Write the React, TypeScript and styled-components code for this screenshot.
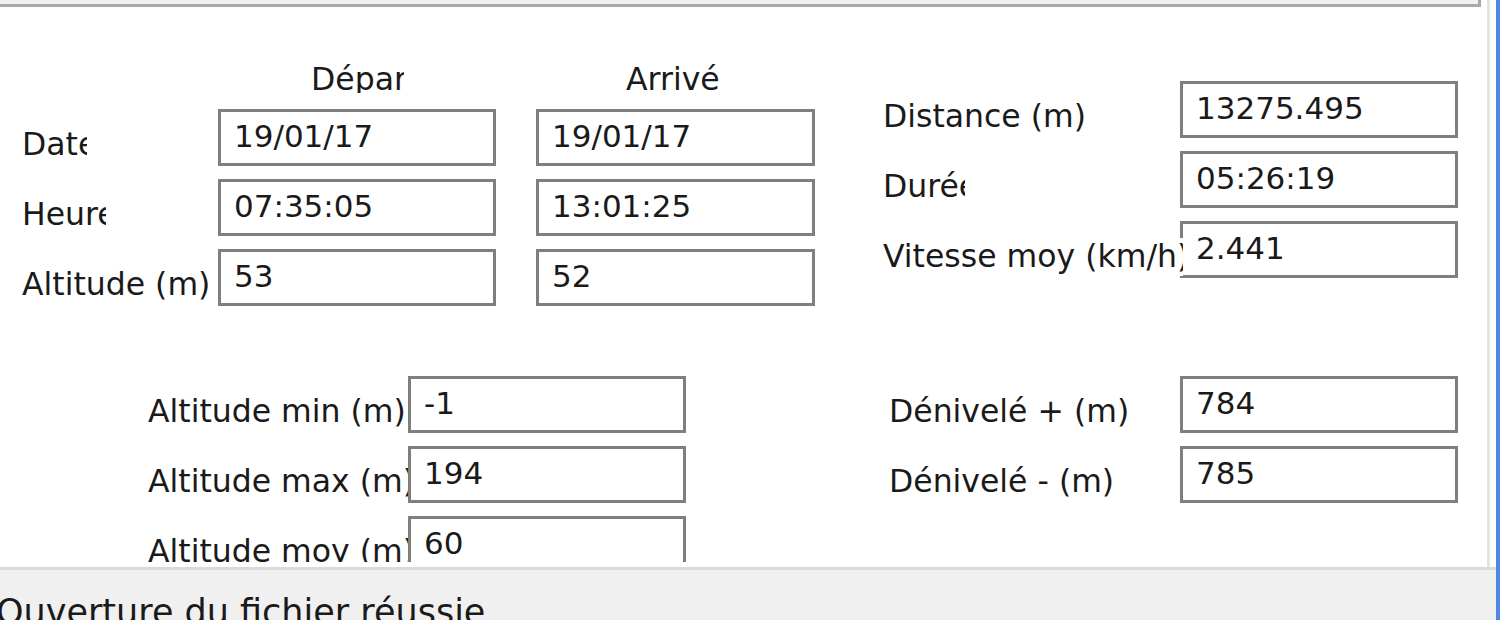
import React from "react";
import styled, { createGlobalStyle } from "styled-components";

const GlobalStyle = createGlobalStyle`
  html, body {
    margin: 0;
    padding: 0;
    overflow: hidden;
    background: #ffffff;
  }
  body {
    font-family: "DejaVu Sans", Verdana, sans-serif;
    color: #1a1a1a;
  }
`;

const Window = styled.div`
  width: 1500px;
  height: 620px;
  box-sizing: border-box;
  display: flex;
  flex-direction: column;
  border-right: 4px solid #4f87e2;
  background: #ffffff;
  overflow: hidden;
`;

const Main = styled.div`
  flex: none;
  height: 567px;
  display: flex;
  flex-direction: column;
  margin-right: 6px;
  border-right: 3px solid #e3e3e3;
`;

const TopStrip = styled.div`
  flex: none;
  width: 1481px;
  height: 7px;
  box-sizing: border-box;
  background: #f1f1f1;
  border-bottom: 3px solid #a6a8ae;
  border-right: 3px solid #a6a8ae;
`;

const Panel = styled.div`
  flex: 1;
  min-height: 0;
  overflow: hidden;
  background: #ffffff;
  border-bottom: 5px solid #ffffff;
  font-size: 31.5px;
  line-height: 36px;
`;

const Section = styled.div<{ $top: number }>`
  display: flex;
  align-items: flex-start;
  padding-top: ${(p) => p.$top}px;
`;

const Group = styled.div<{ $left: number; $top?: number }>`
  flex: none;
  display: flex;
  flex-direction: column;
  gap: 13px;
  margin-left: ${(p) => p.$left}px;
  margin-top: ${(p) => p.$top ?? 0}px;
`;

const HeaderRow = styled.div`
  display: flex;
  height: 32px;
  margin-bottom: 3px;
  padding-left: 196px;
`;

const HeadLabel = styled.div<{ $left: number; $w: number }>`
  flex: none;
  margin-left: ${(p) => p.$left}px;
  width: ${(p) => p.$w}px;
  height: 32px;
  overflow: hidden;
  white-space: nowrap;
`;

const Row = styled.div`
  display: flex;
  align-items: flex-start;
`;

const Label = styled.div<{ $w: number; $col: number }>`
  flex: none;
  position: relative;
  z-index: ${(p) => (p.$w > p.$col ? 1 : 0)};
  width: ${(p) => p.$w}px;
  margin-right: ${(p) => p.$col - p.$w}px;
  margin-top: 17px;
  height: 38px;
  overflow: hidden;
  white-space: nowrap;
  background: #ffffff;
`;

const Box = styled.div<{ $w?: number; $gap?: number }>`
  flex: none;
  box-sizing: border-box;
  width: ${(p) => p.$w ?? 278}px;
  height: 57px;
  margin-left: ${(p) => p.$gap ?? 0}px;
  padding: 6px 0 0 13px;
  border: 3px solid #7f7f7f;
  background: #ffffff;
  font-size: 31px;
  white-space: nowrap;
  overflow: hidden;
`;

const StatusBar = styled.div`
  flex: 1;
  border-top: 3px solid #dadada;
  background: #f0f0f0;
  overflow: hidden;
  padding-top: 22px;
  font-size: 35px;
  line-height: 41px;
  white-space: nowrap;
  text-indent: -4px;
`;

interface Field {
  label: string;
  w: number;
  value: string;
}

const times: { label: string; w: number; dep: string; arr: string }[] = [
  { label: "Date", w: 65, dep: "19/01/17", arr: "19/01/17" },
  { label: "Heure", w: 84, dep: "07:35:05", arr: "13:01:25" },
  { label: "Altitude (m)", w: 196, dep: "53", arr: "52" },
];

const totals: Field[] = [
  { label: "Distance (m)", w: 297, value: "13275.495" },
  { label: "Durée", w: 82, value: "05:26:19" },
  { label: "Vitesse moy (km/h)", w: 300, value: "2.441" },
];

const altitudes: Field[] = [
  { label: "Altitude min (m)", w: 260, value: "-1" },
  { label: "Altitude max (m)", w: 260, value: "194" },
  { label: "Altitude moy (m)", w: 260, value: "60" },
];

const climbs: Field[] = [
  { label: "Dénivelé + (m)", w: 291, value: "784" },
  { label: "Dénivelé - (m)", w: 291, value: "785" },
];

const FieldList = ({ items, col }: { items: Field[]; col: number }) => (
  <>
    {items.map((f) => (
      <Row key={f.label}>
        <Label $w={f.w} $col={col}>
          {f.label}
        </Label>
        <Box>{f.value}</Box>
      </Row>
    ))}
  </>
);

export default function App(): React.ReactElement {
  return (
    <>
      <GlobalStyle />
      <Window>
        <Main>
          <TopStrip />
          <Panel>
            <Section $top={54}>
              <Group $left={22}>
                <HeaderRow>
                  <HeadLabel $left={93} $w={93}>
                    Départ
                  </HeadLabel>
                  <HeadLabel $left={222} $w={95}>
                    Arrivée
                  </HeadLabel>
                </HeaderRow>
                {times.map((t) => (
                  <Row key={t.label}>
                    <Label $w={t.w} $col={196}>
                      {t.label}
                    </Label>
                    <Box>{t.dep}</Box>
                    <Box $w={279} $gap={40}>
                      {t.arr}
                    </Box>
                  </Row>
                ))}
              </Group>
              <Group $left={68} $top={20}>
                <FieldList items={totals} col={297} />
              </Group>
            </Section>
            <Section $top={70}>
              <Group $left={148}>
                <FieldList items={altitudes} col={260} />
              </Group>
              <Group $left={203}>
                <FieldList items={climbs} col={291} />
              </Group>
            </Section>
          </Panel>
        </Main>
        <StatusBar>Ouverture du fichier réussie</StatusBar>
      </Window>
    </>
  );
}
